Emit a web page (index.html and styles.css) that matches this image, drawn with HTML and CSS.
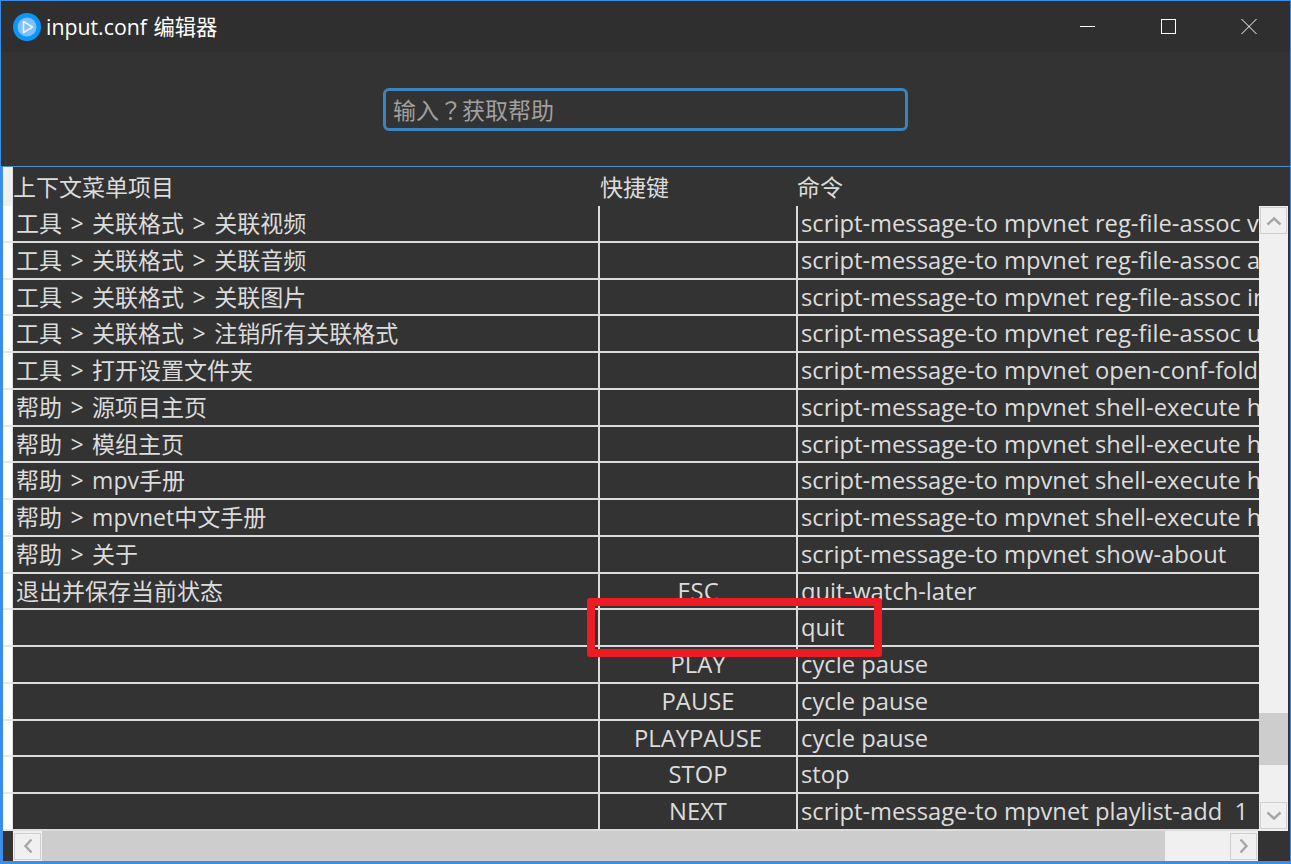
FILE: index.html
```html
<!DOCTYPE html>
<html lang="zh">
<head>
<meta charset="utf-8">
<title>input.conf 编辑器</title>
<link rel="stylesheet" href="styles.css">
</head>
<body>
<div class="window">
  <header class="titlebar">
    <svg class="logo" width="28" height="28" viewBox="0 0 28 28"><circle cx="14" cy="14" r="14" fill="#0a96fa"/><circle cx="14" cy="14" r="9.5" fill="#7cc0ff"/><path d="M10.5 8.5 L19.5 14 L10.5 19.5 Z" fill="#7cc0ff" stroke="#eaf5ff" stroke-width="1.6" stroke-linejoin="round"/></svg>
    <span class="title">input.conf 编辑器</span>
    <div class="controls">
      <svg class="ctl" width="16" height="16" viewBox="0 0 16 16"><path d="M1 7.5H16" stroke="#fff" fill="none"/></svg>
      <svg class="ctl" width="16" height="16" viewBox="0 0 16 16"><rect x="1.5" y="0.5" width="14" height="14" stroke="#fff" fill="none"/></svg>
      <svg class="ctl" width="16" height="16" viewBox="0 0 16 16"><path d="M0.5 0L15.5 15M15.5 0L0.5 15" stroke="#fff" fill="none"/></svg>
    </div>
  </header>
  <div class="search-area">
    <div class="search">输入<span class="q">？</span>获取帮助</div>
  </div>
  <div class="grid">
    <div class="head">
      <div class="corner"></div>
      <div class="hcell h1">上下文菜单项目</div>
      <div class="hcell h2">快捷键</div>
      <div class="hcell h3">命令</div>
    </div>
    <div class="middle">
      <div class="row-heads">
        <i></i><i></i><i></i><i></i><i></i><i></i><i></i><i></i><i></i><i></i><i></i><i></i><i></i><i></i><i></i><i></i><i></i>
      </div>
      <div class="rows">
        <div class="row"><div class="c1">工具 &gt; 关联格式 &gt; 关联视频</div><div class="c2"></div><div class="c3">script-message-to mpvnet reg-file-assoc video</div></div>
        <div class="row"><div class="c1">工具 &gt; 关联格式 &gt; 关联音频</div><div class="c2"></div><div class="c3">script-message-to mpvnet reg-file-assoc audio</div></div>
        <div class="row"><div class="c1">工具 &gt; 关联格式 &gt; 关联图片</div><div class="c2"></div><div class="c3">script-message-to mpvnet reg-file-assoc image</div></div>
        <div class="row"><div class="c1">工具 &gt; 关联格式 &gt; 注销所有关联格式</div><div class="c2"></div><div class="c3">script-message-to mpvnet reg-file-assoc unreg</div></div>
        <div class="row"><div class="c1">工具 &gt; 打开设置文件夹</div><div class="c2"></div><div class="c3">script-message-to mpvnet open-conf-folder</div></div>
        <div class="row"><div class="c1">帮助 &gt; 源项目主页</div><div class="c2"></div><div class="c3">script-message-to mpvnet shell-execute https://mpv.net</div></div>
        <div class="row"><div class="c1">帮助 &gt; 模组主页</div><div class="c2"></div><div class="c3">script-message-to mpvnet shell-execute https://mpv.net</div></div>
        <div class="row"><div class="c1">帮助 &gt; mpv手册</div><div class="c2"></div><div class="c3">script-message-to mpvnet shell-execute https://mpv.io</div></div>
        <div class="row"><div class="c1">帮助 &gt; mpvnet中文手册</div><div class="c2"></div><div class="c3">script-message-to mpvnet shell-execute https://mpv.net</div></div>
        <div class="row"><div class="c1">帮助 &gt; 关于</div><div class="c2"></div><div class="c3">script-message-to mpvnet show-about</div></div>
        <div class="row"><div class="c1">退出并保存当前状态</div><div class="c2">ESC</div><div class="c3">quit-watch-later</div></div>
        <div class="row"><div class="c1"></div><div class="c2"></div><div class="c3">quit</div></div>
        <div class="row"><div class="c1"></div><div class="c2">PLAY</div><div class="c3">cycle pause</div></div>
        <div class="row"><div class="c1"></div><div class="c2">PAUSE</div><div class="c3">cycle pause</div></div>
        <div class="row"><div class="c1"></div><div class="c2">PLAYPAUSE</div><div class="c3">cycle pause</div></div>
        <div class="row"><div class="c1"></div><div class="c2">STOP</div><div class="c3">stop</div></div>
        <div class="row"><div class="c1"></div><div class="c2">NEXT</div><div class="c3">script-message-to mpvnet playlist-add&nbsp; 1</div></div>
      </div>
      <div class="vscroll">
        <div class="sbtn"><svg width="16" height="10" viewBox="0 0 16 10"><path d="M1.5 8.5L8 2.5L14.5 8.5" stroke="#a6a6a6" stroke-width="2.4" fill="none"/></svg></div>
        <div class="vtrack"><div class="vthumb"></div></div>
        <div class="sbtn"><svg width="16" height="10" viewBox="0 0 16 10"><path d="M1.5 1.5L8 7.5L14.5 1.5" stroke="#a6a6a6" stroke-width="2.4" fill="none"/></svg></div>
      </div>
    </div>
    <div class="bottom">
      <div class="hscroll">
        <div class="sbtn"><svg width="10" height="16" viewBox="0 0 10 16"><path d="M8.5 1.5L2.5 8L8.5 14.5" stroke="#a6a6a6" stroke-width="2.4" fill="none"/></svg></div>
        <div class="htrack"><div class="hthumb"></div></div>
        <div class="sbtn"><svg width="10" height="16" viewBox="0 0 10 16"><path d="M1.5 1.5L7.5 8L1.5 14.5" stroke="#a6a6a6" stroke-width="2.4" fill="none"/></svg></div>
      </div>
    </div>
  </div>
  <div class="mark"></div>
</div>
</body>
</html>
```
FILE: styles.css
```css
* { box-sizing: border-box; }
html, body { margin: 0; padding: 0; }
body { width: 1291px; height: 864px; overflow: hidden; background: #333; font-family: "Open Sans", "Noto Sans CJK SC", sans-serif; }
.window { position: relative; width: 1291px; height: 864px; background: #333; border-top: 1px solid #3b8ee8; border-left: 1px solid #3b8ee8; border-right: 1px solid #3b8ee8; border-bottom: 3px solid #3b8ee8; display: flex; flex-direction: column; }
.titlebar { height: 51px; background: #2f2f2f; display: flex; align-items: center; padding-left: 12px; flex: none; }
.logo { flex: none; }
.title { margin-left: 5px; margin-top: -2px; font-size: 21.3px; word-spacing: 1px; color: #fff; white-space: nowrap; }
.controls { margin-left: auto; display: flex; gap: 65px; padding-right: 33px; padding-top: 1px; align-items: center; }
.ctl { display: block; }
.search-area { height: 114px; flex: none; display: flex; justify-content: center; padding-top: 36px; }
.search { width: 525px; height: 43px; border: 3px solid #3a84c0; border-radius: 6px; color: #a0a0a0; font-size: 23px; line-height: 37px; padding-left: 7px; font-family: "Noto Sans CJK SC", sans-serif; }
.q { display: inline-block; width: 23px; text-align: center; font-family: "Noto Sans CJK TC", sans-serif; font-feature-settings: "palt"; }
.grid { flex: 1; display: flex; flex-direction: column; border-top: 1px solid #4f8fc7; border-left: 2px solid #3b8ee8; min-height: 0; }
.head { display: flex; height: 39px; flex: none; color: #dcdcdc; font-size: 23px; line-height: 38px; }
.corner { width: 10px; background: #f0f0f0; flex: none; border-right: 1px solid #e0e0e0; }
.hcell { flex: none; white-space: nowrap; font-family: "Noto Sans CJK SC", sans-serif; }
.h1 { width: 587px; }
.h2 { width: 197px; }
.h3 { flex: 1; }
.middle { display: flex; flex: none; height: 625px; }
.row-heads { width: 10px; flex: none; display: flex; flex-direction: column; }
.row-heads i { display: block; height: 36.75px; background: #fff; border-bottom: 2px solid #e8e8e8; border-right: 1px solid #e0e0e0; }
.rows { width: 1246px; flex: none; overflow: hidden; }
.row { display: flex; height: 36.75px; border-bottom: 2px solid #dcdcdc; color: #dcdcdc; font-size: 23.75px; line-height: 34px; white-space: nowrap; }
.c1 { width: 587px; flex: none; padding-left: 3px; border-right: 2px solid #dcdcdc; font-size: 23px; word-spacing: 2.5px; }
.c2 { width: 198px; flex: none; text-align: center; border-right: 2px solid #dcdcdc; }
.c3 { flex: 1; padding-left: 3px; overflow: hidden; }
.vscroll { width: 29px; flex: none; display: flex; flex-direction: column; background: #f0f0f0; padding-bottom: 1px; }
.sbtn { flex: none; width: 27px; height: 27px; margin: 1px; background: #f0f0f0; border: 1px solid #d0d0d0; display: flex; align-items: center; justify-content: center; }
.vtrack { flex: 1; position: relative; }
.vthumb { position: absolute; left: 0; right: 0; top: 478px; height: 52px; background: #cdcdcd; }
.bottom { flex: 1; display: flex; padding-left: 10px; min-height: 0; }
.hscroll { width: 1245px; display: flex; background: #f0f0f0; height: 30px; align-items: center; }
.htrack { flex: 1; align-self: stretch; position: relative; }
.hthumb { position: absolute; left: 0; top: 0; bottom: 0; width: 1123px; background: #cdcdcd; }
.mark { position: absolute; left: 586px; top: 597px; width: 295px; height: 59px; border: 8px solid #ed1c24; border-radius: 3px; }
```
